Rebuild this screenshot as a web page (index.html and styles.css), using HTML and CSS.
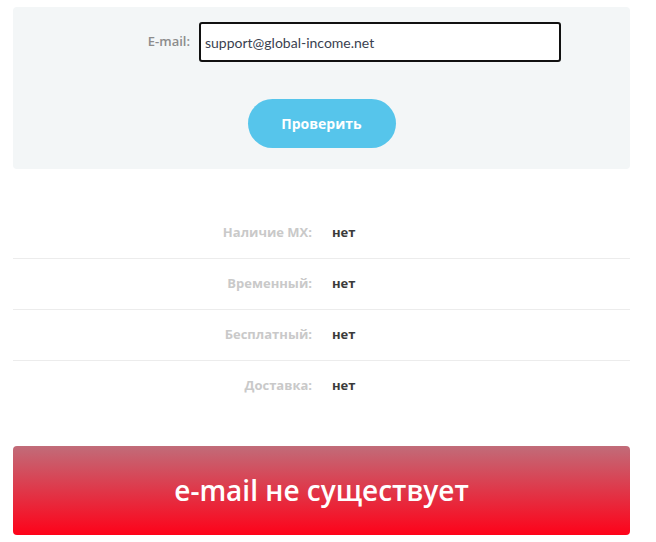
FILE: index.html
```html
<!DOCTYPE html>
<html lang="ru">
<head>
    <meta charset="UTF-8">
    <meta name="viewport" content="width=device-width, initial-scale=1.0">
    <title>Проверка e-mail</title>
    <link rel="stylesheet" href="styles.css">
</head>
<body>
    <div class="wrap">
        <form class="check-form">
            <div class="field">
                <label for="email">E-mail:</label>
                <input type="text" id="email" value="support@global-income.net">
            </div>
            <button type="button">Проверить</button>
        </form>

        <div class="results">
            <div class="row"><span class="key">Наличие MX:</span><span class="val">нет</span></div>
            <div class="row"><span class="key">Временный:</span><span class="val">нет</span></div>
            <div class="row"><span class="key">Бесплатный:</span><span class="val">нет</span></div>
            <div class="row"><span class="key">Доставка:</span><span class="val">нет</span></div>
        </div>

        <div class="verdict">e-mail не существует</div>
    </div>
</body>
</html>
```

FILE: styles.css
```css
body {
    margin: 0;
    background: #fff;
    font-family: "Open Sans", Arial, sans-serif;
    color: #333;
}
.wrap {
    width: 617px;
    margin: 7px 0 0 13px;
}
.check-form {
    background: #f3f6f7;
    border-radius: 4px;
    padding: 15px 0 21px;
    display: flex;
    flex-direction: column;
    align-items: center;
    gap: 37px;
}
.field {
    align-self: stretch;
    display: flex;
    align-items: center;
    gap: 9px;
}
.field label {
    width: 177px;
    text-align: right;
    font-size: 13px;
    font-weight: 600;
    color: #8c8c8c;
    margin-top: -2px;
}
.field input {
    width: 362px;
    height: 40px;
    box-sizing: border-box;
    border: 2px solid #111;
    border-radius: 3px;
    padding: 0 4px 0;
    font-family: "Lato", Arial, sans-serif;
    font-size: 14px;
    color: #3a4150;
    background: #fff;
    outline: none;
}
button {
    width: 148px;
    height: 49px;
    border: none;
    border-radius: 25px;
    background: #56c5eb;
    color: #fff;
    font-family: "Open Sans", Arial, sans-serif;
    font-weight: 700;
    font-size: 14px;
    cursor: pointer;
}
.results {
    margin-top: 39px;
}
.row {
    display: flex;
    align-items: center;
    gap: 20px;
    height: 50px;
    border-bottom: 1px solid #ececec;
}
.row:last-child {
    border-bottom: none;
}
.key {
    width: 299px;
    text-align: right;
    font-size: 13px;
    font-weight: 700;
    color: #c9c9c9;
    margin-top: -2px;
}
.val {
    font-size: 13px;
    font-weight: 700;
    color: #3b3b3b;
    margin-top: -2px;
}
.verdict {
    margin-top: 35px;
    height: 89px;
    border-radius: 4px;
    background: linear-gradient(to bottom, #c16c79, #fe0219);
    color: #fff;
    font-size: 28px;
    font-weight: 600;
    display: flex;
    align-items: center;
    justify-content: center;
    padding-bottom: 2px;
    box-sizing: border-box;
}
```
